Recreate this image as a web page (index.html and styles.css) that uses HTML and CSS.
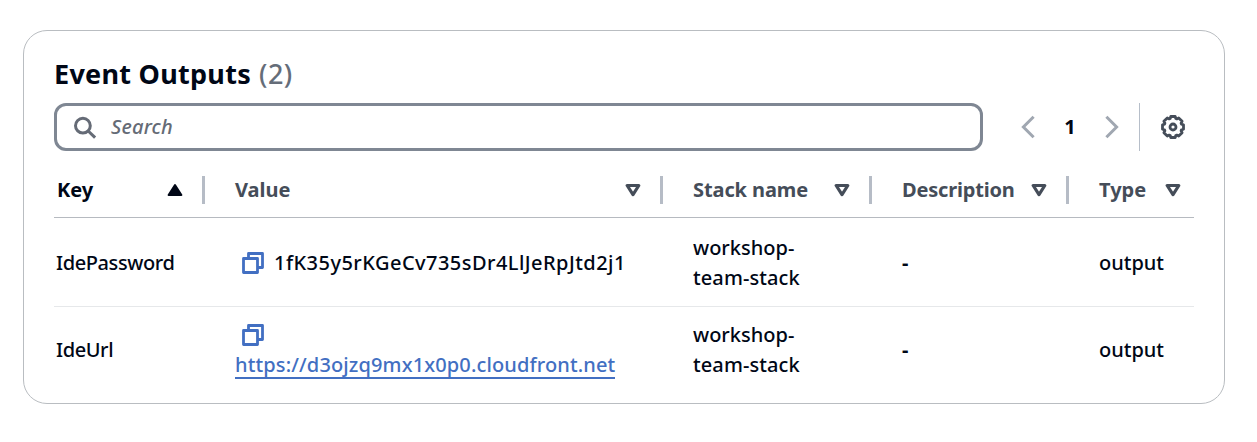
FILE: index.html
```html
<!DOCTYPE html>
<html lang="en">
<head>
<meta charset="utf-8">
<title>Event Outputs</title>
<link rel="stylesheet" href="styles.css">
</head>
<body>
<svg class="defs" width="0" height="0">
  <symbol id="sort" viewBox="0 0 16 14"><path d="M2.2 2.5h11.6L8 11.6z" fill="none" stroke="currentColor" stroke-width="3.2" stroke-linejoin="round"/></symbol>
  <symbol id="copy" viewBox="0 0 22 22"><path d="M6.5 6V1.5h14v14H16M1.5 6.5h14v14h-14z" fill="none" stroke="currentColor" stroke-width="2.8" stroke-linejoin="round"/></symbol>
</svg>
<main class="card">
  <h1 class="title"><span class="title-text">Event Outputs</span> <span class="count">(2)</span></h1>
  <div class="toolbar">
    <label class="search">
      <svg class="search-icon" viewBox="0 0 24 24"><circle cx="9.9" cy="9.7" r="7.4"/><path d="M15.2 15l6.9 6.7"/></svg>
      <span class="placeholder">Search</span>
    </label>
    <nav class="pager">
      <svg class="chevron" viewBox="0 0 14 24"><path d="M12.6 1.8L2.4 12l10.2 10.2"/></svg>
      <span class="page">1</span>
      <svg class="chevron" viewBox="0 0 14 24"><path d="M1.4 1.8L11.6 12 1.4 22.2"/></svg>
    </nav>
    <div class="settings">
      <svg class="gear" viewBox="0 0 24 24"><path d="M9.8 1.5h4.4l.6 2 1 .4 1.9-1 3.4 3.4-1 1.9.4 1 2 .6v4.4l-2 .6-.4 1 1 1.9-3.4 3.4-1.9-1-1 .4-.6 2H9.8l-.6-2-1-.4-1.9 1-3.4-3.4 1-1.9-.4-1-2-.6V9.8l2-.6.4-1-1-1.9 3.4-3.4 1.9 1 1-.4z"/><circle cx="12" cy="12" r="3"/></svg>
    </div>
  </div>
  <section class="table">
    <div class="row head">
      <div class="th key active"><span>Key</span><svg class="sort" viewBox="0 0 16 14"><path d="M8 2L14.4 12H1.6z" fill="currentColor" stroke="currentColor" stroke-width="2" stroke-linejoin="round"/></svg></div>
      <div class="th"><span>Value</span><svg class="sort"><use href="#sort"/></svg></div>
      <div class="th"><span class="t-stack">Stack name</span><svg class="sort"><use href="#sort"/></svg></div>
      <div class="th"><span class="t-desc">Description</span><svg class="sort"><use href="#sort"/></svg></div>
      <div class="th last"><span>Type</span><svg class="sort"><use href="#sort"/></svg></div>
    </div>
    <div class="row body">
      <div class="td key"><span class="t-name">IdePassword</span></div>
      <div class="td inline"><svg class="copy"><use href="#copy"/></svg><span class="t-secret">1fK35y5rKGeCv735sDr4LlJeRpJtd2j1</span></div>
      <div class="td"><span>workshop-</span><span class="t-team">team-stack</span></div>
      <div class="td dash">-</div>
      <div class="td"><span>output</span></div>
    </div>
    <div class="row body">
      <div class="td key"><span class="t-name">IdeUrl</span></div>
      <div class="td"><span class="copy-line"><svg class="copy"><use href="#copy"/></svg></span><a class="link">https://d3ojzq9mx1x0p0.cloudfront.net</a></div>
      <div class="td"><span>workshop-</span><span class="t-team">team-stack</span></div>
      <div class="td dash">-</div>
      <div class="td"><span>output</span></div>
    </div>
  </section>
</main>
</body>
</html>
```
FILE: styles.css
```css
* { box-sizing: border-box; }
body { margin: 0; padding: 30px 32px 0 23px; background: #fff; color: #000716; font-family: "Noto Sans", sans-serif; font-size: 20px; font-weight: 500; line-height: 30px; white-space: nowrap; }
svg { display: block; flex: none; }
.defs { position: absolute; }
.card { height: 374px; border: 1px solid #b9bdc1; border-radius: 24px; padding: 24px 30px 0; }
.title { margin: 0; height: 48px; font-size: 27px; line-height: 38px; font-weight: 700; display: flex; gap: 8px; }
.title-text { letter-spacing: 0.27px; }
.count { color: #656d79; font-weight: 500; letter-spacing: 0.5px; }
.toolbar { display: flex; height: 48px; }
.search { width: 929px; border: 3px solid #7f8793; border-radius: 12px; display: flex; align-items: center; padding-left: 16px; gap: 14px; color: #656b76; }
.search-icon { width: 24px; height: 24px; margin-top: 1px; fill: none; stroke: currentColor; stroke-width: 3; }
.placeholder { font-style: italic; font-weight: 500; letter-spacing: 0.2px; }
.pager { width: 157px; padding: 0 20px 0 38px; border-right: 1px solid #b6bec9; display: flex; align-items: center; justify-content: space-between; font-weight: 700; }
.chevron { width: 14px; height: 24px; fill: none; stroke: #a0a7b1; stroke-width: 3; }
.settings { display: flex; align-items: center; padding-left: 21px; }
.gear { width: 24px; height: 24px; fill: none; stroke: #454d59; stroke-width: 2.8; stroke-linejoin: round; }
.table { width: 1140px; padding-top: 11px; }
.row { display: grid; grid-template-columns: 151px 458px 209px 197px 125px; }
.head { height: 56px; border-bottom: 1px solid #b6bac0; font-weight: 700; color: #454d59; }
.th { height: 28px; margin-top: 14px; padding: 0 19px 0 30px; border-right: 3px solid #b6bcc6; display: flex; align-items: center; justify-content: space-between; }
.th.key { padding-left: 3px; }
.th.active { color: #000716; }
.th.last { border: 0; padding-right: 13px; }
.t-stack { letter-spacing: -0.1px; }
.t-desc { letter-spacing: -0.18px; }
.sort { width: 16px; height: 14px; }
.body { height: 89px; }
.body + .body { height: 87px; margin-top: -1px; border-top: 1px solid #e6e8ea; }
.td { display: flex; flex-direction: column; justify-content: center; align-items: flex-start; padding-left: 30px; }
.td.key { padding-left: 2px; }
.td.inline { flex-direction: row; justify-content: flex-start; align-items: center; gap: 10px; padding-left: 37px; }
.td.dash { font-weight: 700; }
.copy { width: 22px; height: 22px; color: #426fc2; }
.copy-line { height: 30px; padding: 4px 0 0 7px; }
.link { height: 29px; margin-bottom: 1px; color: #426fc2; border-bottom: 2px solid currentColor; line-height: 29px; letter-spacing: 0.13px; }
.t-name { letter-spacing: -0.4px; }
.t-team { letter-spacing: 0.1px; }
.t-secret { letter-spacing: 0.46px; }
```
